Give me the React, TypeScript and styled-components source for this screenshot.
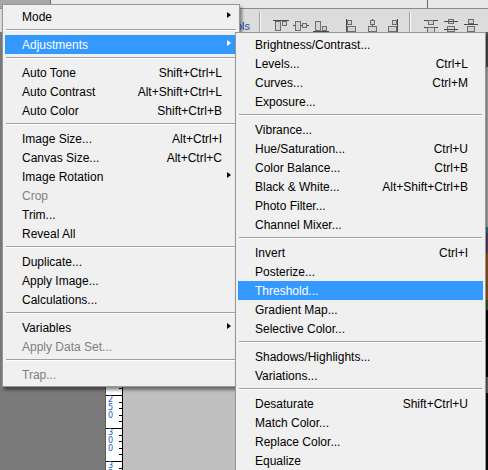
import React from "react";
import styled, { createGlobalStyle } from "styled-components";

const Global = createGlobalStyle`
  html, body { margin: 0; padding: 0; }
  body { background: #7a7a7a; font-family: "Liberation Sans", Arial, sans-serif; }
`;

const Screen = styled.div`
  position: relative;
  width: 488px;
  height: 470px;
  overflow: hidden;
  display: flex;
  flex-direction: column;
  background: #7a7a7a;
`;

const TabStrip = styled.div`
  height: 8px;
  flex: none;
  display: flex;
  background: #e8e8e8;
  border-bottom: 1px solid #8c8c8c;
`;

const Tab = styled.div<{ $w: number; $active?: boolean }>`
  width: ${(p) => p.$w}px;
  flex: none;
  background: ${(p) => (p.$active ? "#a7a7a7" : "transparent")};
  border-right: 1px solid #6a6a6a;
`;

const Toolbar = styled.div`
  height: 23px;
  flex: none;
  display: flex;
  align-items: flex-start;
  background: #dcdcdc;
  overflow: hidden;
`;

const ToolLabel = styled.div`
  width: 250px;
  flex: none;
  text-align: right;
  white-space: nowrap;
  overflow: hidden;
  padding-top: 11px;
  font: 11px "Liberation Sans", Arial, sans-serif;
  color: #1b4f9e;
`;

const ToolSep = styled.div<{ $ml: number }>`
  flex: none;
  width: 1px;
  height: 23px;
  margin-top: 3px;
  margin-left: ${(p) => p.$ml}px;
  background: #a2a2a2;
  border-right: 1px solid #f6f6f6;
`;

const IconGroup = styled.div<{ $ml: number }>`
  display: flex;
  gap: 4px;
  margin-left: ${(p) => p.$ml}px;
  padding-top: 10px;
`;

const Workspace = styled.div`
  flex: 1;
  display: flex;
  min-height: 0;
`;

const Pasteboard = styled.div`
  width: 105px;
  flex: none;
  background: #7a7a7a;
`;

const Ruler = styled.div`
  width: 16px;
  flex: none;
  background: #ffffff;
  border-left: 1px solid #5a5a5a;
  border-right: 1px solid #000;
  display: flex;
  flex-direction: column;
  overflow: hidden;
`;

const RulerSegment = styled.div`
  height: 33px;
  flex: none;
  box-sizing: border-box;
  border-top: 1px solid #000;
  display: flex;
  justify-content: space-between;
`;

const RulerDigits = styled.div`
  display: flex;
  flex-direction: column;
  padding: 0 0 0 2px;
  font: 8px/8px "DejaVu Sans", sans-serif;
  color: #0b5cc4;
`;

const RulerTicks = styled.div`
  width: 3px;
  background: repeating-linear-gradient(
    to bottom,
    transparent 0,
    transparent 5.6px,
    #000 5.6px,
    #000 6.6px
  );
`;

const Canvas = styled.div`
  flex: 1;
  background: #c0c0c0;
`;

const ImageStrip = styled.div`
  width: 2px;
  flex: none;
  background: linear-gradient(
    to bottom,
    #575757 0,
    #575757 35px,
    #c9c9c9 35px,
    #c9c9c9 195px,
    #2e8c8c 195px,
    #2e8c8c 201px,
    #6b4c7c 201px,
    #6b4c7c 221px,
    #b2661c 221px,
    #b2661c 268px,
    #2f6b2f 268px,
    #2f6b2f 278px,
    #060606 278px,
    #060606 345px,
    #777 345px,
    #777 361px,
    #0a0a0a 361px
  );
`;

const MenuPanel = styled.div<{ $left: number; $top: number; $width: number }>`
  position: absolute;
  left: ${(p) => p.$left}px;
  top: ${(p) => p.$top}px;
  width: ${(p) => p.$width}px;
  box-sizing: border-box;
  background: #f0f0f0;
  border: 1px solid #979797;
  padding: 2px;
  box-shadow: 2px 3px 3px rgba(0, 0, 0, 0.45);
  font-family: "Liberation Sans", Arial, sans-serif;
  font-size: 12px;
`;

const Row = styled.div<{ $active?: boolean; $disabled?: boolean }>`
  height: 19px;
  box-sizing: border-box;
  display: flex;
  align-items: flex-start;
  padding: 2px 6px 0 17px;
  line-height: 17px;
  white-space: nowrap;
  background: ${(p) => (p.$active ? "#3399ff" : "transparent")};
  color: ${(p) => (p.$active ? "#ffffff" : p.$disabled ? "#808080" : "#000000")};
`;

const Label = styled.span`
  flex: 1;
`;

const Shortcut = styled.span``;

const ArrowSlot = styled.span`
  width: 9px;
  flex: none;
  display: flex;
  justify-content: flex-end;
  padding-top: 3px;
`;

const Arrow = styled.span<{ $active?: boolean }>`
  width: 0;
  height: 0;
  border-left: 4px solid ${(p) => (p.$active ? "#ffffff" : "#000000")};
  border-top: 3.5px solid transparent;
  border-bottom: 3.5px solid transparent;
`;

const Separator = styled.div`
  height: 9px;
  box-sizing: border-box;
  padding: 3px 1px 0;
  &::before {
    content: "";
    display: block;
    height: 1px;
    background: #a0a0a0;
    border-bottom: 1px solid #ffffff;
  }
`;

type Item =
  | { sep: true }
  | {
      sep?: false;
      label: string;
      shortcut?: string;
      sub?: boolean;
      active?: boolean;
      disabled?: boolean;
    };

const mainItems: Item[] = [
  { label: "Mode", sub: true },
  { sep: true },
  { label: "Adjustments", sub: true, active: true },
  { sep: true },
  { label: "Auto Tone", shortcut: "Shift+Ctrl+L" },
  { label: "Auto Contrast", shortcut: "Alt+Shift+Ctrl+L" },
  { label: "Auto Color", shortcut: "Shift+Ctrl+B" },
  { sep: true },
  { label: "Image Size...", shortcut: "Alt+Ctrl+I" },
  { label: "Canvas Size...", shortcut: "Alt+Ctrl+C" },
  { label: "Image Rotation", sub: true },
  { label: "Crop", disabled: true },
  { label: "Trim..." },
  { label: "Reveal All" },
  { sep: true },
  { label: "Duplicate..." },
  { label: "Apply Image..." },
  { label: "Calculations..." },
  { sep: true },
  { label: "Variables", sub: true },
  { label: "Apply Data Set...", disabled: true },
  { sep: true },
  { label: "Trap...", disabled: true },
];

const subItems: Item[] = [
  { label: "Brightness/Contrast..." },
  { label: "Levels...", shortcut: "Ctrl+L" },
  { label: "Curves...", shortcut: "Ctrl+M" },
  { label: "Exposure..." },
  { sep: true },
  { label: "Vibrance..." },
  { label: "Hue/Saturation...", shortcut: "Ctrl+U" },
  { label: "Color Balance...", shortcut: "Ctrl+B" },
  { label: "Black & White...", shortcut: "Alt+Shift+Ctrl+B" },
  { label: "Photo Filter..." },
  { label: "Channel Mixer..." },
  { sep: true },
  { label: "Invert", shortcut: "Ctrl+I" },
  { label: "Posterize..." },
  { label: "Threshold...", active: true },
  { label: "Gradient Map..." },
  { label: "Selective Color..." },
  { sep: true },
  { label: "Shadows/Highlights..." },
  { label: "Variations..." },
  { sep: true },
  { label: "Desaturate", shortcut: "Shift+Ctrl+U" },
  { label: "Match Color..." },
  { label: "Replace Color..." },
  { label: "Equalize" },
];

function Menu({
  items,
  left,
  top,
  width,
}: {
  items: Item[];
  left: number;
  top: number;
  width: number;
}) {
  return (
    <MenuPanel $left={left} $top={top} $width={width}>
      {items.map((it, i) =>
        it.sep ? (
          <Separator key={i} />
        ) : (
          <Row key={i} $active={it.active} $disabled={it.disabled}>
            <Label>{it.label}</Label>
            {it.shortcut && <Shortcut>{it.shortcut}</Shortcut>}
            <ArrowSlot>{it.sub && <Arrow $active={it.active} />}</ArrowSlot>
          </Row>
        )
      )}
    </MenuPanel>
  );
}

const BOX = { fill: "#d2d2d2", stroke: "#6e6e6e", strokeWidth: 1 };
const LINE = { stroke: "#4a4a4a", strokeWidth: 1 };

function ToolIcon({ kind }: { kind: number }) {
  let body: React.ReactNode = null;
  switch (kind) {
    case 0:
      body = (
        <>
          <line x1="0" y1="1.5" x2="16" y2="1.5" {...LINE} />
          <rect x="2.5" y="2.5" width="5" height="9" {...BOX} />
          <rect x="9.5" y="2.5" width="4" height="4" {...BOX} />
        </>
      );
      break;
    case 1:
      body = (
        <>
          <rect x="2.5" y="2.5" width="5" height="9" {...BOX} />
          <rect x="9.5" y="4.5" width="4" height="4" {...BOX} />
          <line x1="0" y1="6.5" x2="2" y2="6.5" {...LINE} />
          <line x1="8" y1="6.5" x2="9" y2="6.5" {...LINE} />
          <line x1="14" y1="6.5" x2="16" y2="6.5" {...LINE} />
        </>
      );
      break;
    case 2:
      body = (
        <>
          <rect x="2.5" y="2.5" width="5" height="9" {...BOX} />
          <rect x="9.5" y="7.5" width="4" height="4" {...BOX} />
          <line x1="0" y1="12.5" x2="16" y2="12.5" {...LINE} />
        </>
      );
      break;
    case 3:
      body = (
        <>
          <line x1="1.5" y1="0" x2="1.5" y2="14" {...LINE} />
          <rect x="2.5" y="1.5" width="4" height="4" {...BOX} />
          <rect x="2.5" y="7.5" width="8" height="5" {...BOX} />
        </>
      );
      break;
    case 4:
      body = (
        <>
          <line x1="7.5" y1="0" x2="7.5" y2="14" {...LINE} />
          <rect x="5.5" y="1.5" width="4" height="4" {...BOX} />
          <rect x="3.5" y="7.5" width="8" height="5" {...BOX} />
        </>
      );
      break;
    case 5:
      body = (
        <>
          <line x1="12.5" y1="0" x2="12.5" y2="14" {...LINE} />
          <rect x="7.5" y="1.5" width="4" height="4" {...BOX} />
          <rect x="3.5" y="7.5" width="8" height="5" {...BOX} />
        </>
      );
      break;
    case 6:
      body = (
        <>
          <line x1="1" y1="1.5" x2="15" y2="1.5" {...LINE} />
          <rect x="5.5" y="1.5" width="5" height="4" {...BOX} />
          <line x1="1" y1="8.5" x2="15" y2="8.5" {...LINE} />
          <rect x="4.5" y="8.5" width="7" height="5" {...BOX} />
        </>
      );
      break;
    case 7:
      body = (
        <>
          <rect x="5.5" y="0.5" width="5" height="4" {...BOX} />
          <line x1="1" y1="2.5" x2="15" y2="2.5" {...LINE} />
          <rect x="4.5" y="7.5" width="7" height="5" {...BOX} />
          <line x1="1" y1="10.5" x2="15" y2="10.5" {...LINE} />
        </>
      );
      break;
    default:
      body = (
        <>
          <rect x="5.5" y="0.5" width="5" height="4" {...BOX} />
          <line x1="1" y1="5.5" x2="15" y2="5.5" {...LINE} />
          <rect x="4.5" y="7.5" width="7" height="5" {...BOX} />
          <line x1="1" y1="13.5" x2="15" y2="13.5" {...LINE} />
        </>
      );
  }
  return (
    <svg width="16" height="14" viewBox="0 0 16 14" shapeRendering="crispEdges">
      {body}
    </svg>
  );
}

// segments hidden behind the open menus carry no label; the visible ones start at 250
const rulerLabels = Array.from({ length: 14 }, (_, i) =>
  i >= 11 ? String(i * 50 - 300) : ""
);

export default function App() {
  return (
    <>
      <Global />
      <Screen>
        <TabStrip>
          <Tab $w={50} $active />
          <Tab $w={376} />
        </TabStrip>
        <Toolbar>
          <ToolLabel>Show Transform Controls</ToolLabel>
          <ToolSep $ml={9} />
          <IconGroup $ml={12}>
            <ToolIcon kind={0} />
            <ToolIcon kind={1} />
            <ToolIcon kind={2} />
          </IconGroup>
          <IconGroup $ml={16}>
            <ToolIcon kind={3} />
            <ToolIcon kind={4} />
            <ToolIcon kind={5} />
          </IconGroup>
          <ToolSep $ml={8} />
          <IconGroup $ml={12}>
            <ToolIcon kind={6} />
            <ToolIcon kind={7} />
            <ToolIcon kind={8} />
          </IconGroup>
        </Toolbar>
        <Workspace>
          <Pasteboard />
          <Ruler>
            {rulerLabels.map((l, i) => (
              <RulerSegment key={i}>
                <RulerDigits>
                  {l.split("").map((d, j) => (
                    <span key={j}>{d}</span>
                  ))}
                </RulerDigits>
                <RulerTicks />
              </RulerSegment>
            ))}
          </Ruler>
          <Canvas />
          <ImageStrip />
        </Workspace>

        <Menu items={mainItems} left={2} top={4} width={238} />
        <Menu items={subItems} left={235} top={32} width={251} />
      </Screen>
    </>
  );
}
